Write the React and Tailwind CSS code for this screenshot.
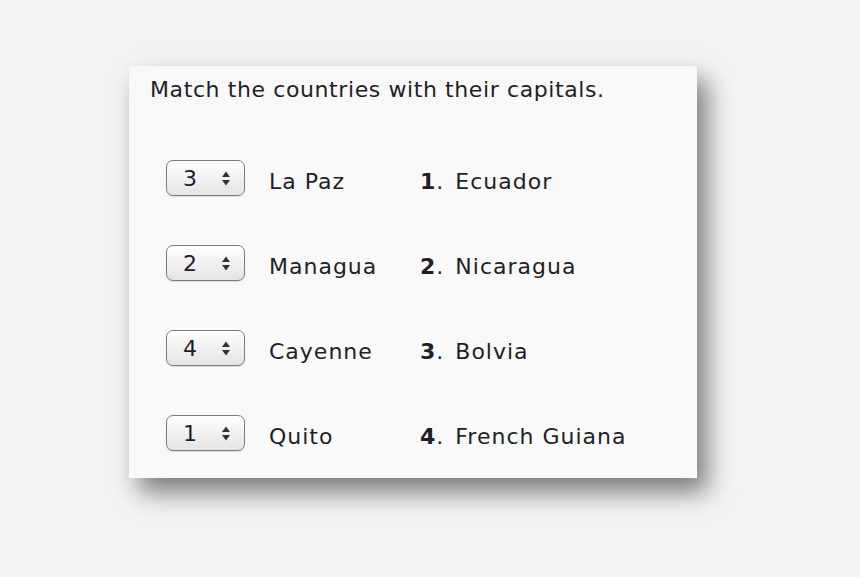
const ROWS = [
  { pick: '3', city: 'La Paz', n: '1', country: 'Ecuador' },
  { pick: '2', city: 'Managua', n: '2', country: 'Nicaragua' },
  { pick: '4', city: 'Cayenne', n: '3', country: 'Bolvia' },
  { pick: '1', city: 'Quito', n: '4', country: 'French Guiana' },
]

function Stepper({ value }) {
  return (
    <div className="w-[79px] h-[36px] rounded-[7px] border border-[#7c7c7c] bg-gradient-to-b from-white to-[#e4e4e4] flex items-center pl-[16px] pr-[13px] shadow-[0_1px_1px_rgba(0,0,0,0.12)]">
      <span className="text-[22px] text-[#1e1e2a]">{value}</span>
      <svg className="ml-auto" width="10" height="17" viewBox="0 0 10 17">
        <path d="M5 1.5 L9 7 H1 Z" fill="#333" />
        <path d="M5 15.5 L9 10 H1 Z" fill="#333" />
      </svg>
    </div>
  )
}

export default function App() {
  return (
    <div className="w-[860px] h-[577px] bg-[#f4f4f4] pt-[66px] pl-[129px]" style={{ fontFamily: "'DejaVu Sans', Verdana, sans-serif" }}>
      <div className="w-[568px] h-[412px] bg-[#f9f9f9] shadow-[10px_14px_24px_rgba(0,0,0,0.5)] pt-[8px] pl-[21px] text-[#1f1f28]">
        <p className="text-[22px] leading-[32px] tracking-[0.6px]">Match the countries with their capitals.</p>
        <div className="flex flex-col mt-[54px] gap-[49px] pl-[16px]">
          {ROWS.map((r) => (
            <div key={r.city} className="flex items-center h-[36px] text-[22px] tracking-[1px]">
              <Stepper value={r.pick} />
              <span className="w-[175px] pl-[24px] pt-[6px]">{r.city}</span>
              <span className="pt-[6px]"><b>{r.n}</b>.</span>
              <span className="ml-[11px] pt-[6px]">{r.country}</span>
            </div>
          ))}
        </div>
      </div>
    </div>
  )
}
